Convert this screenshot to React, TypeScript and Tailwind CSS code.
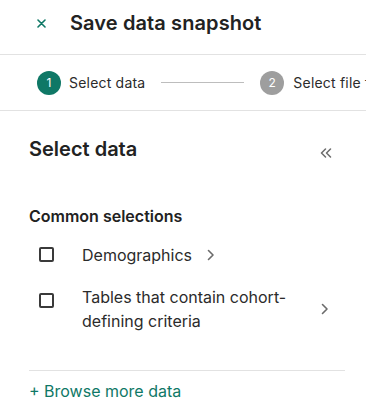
import type { ReactNode } from "react";

const TEAL = "#0f7866";

function Chevron({ className = "" }: { className?: string }) {
  return (
    <svg width="8" height="12" viewBox="0 0 8 12" className={className} fill="none">
      <path d="M1.5 1.5 6 6l-4.5 4.5" stroke="#6b6b6b" strokeWidth="1.6" strokeLinecap="round" strokeLinejoin="round" />
    </svg>
  );
}

function Row({ label, box, children }: { label: ReactNode; box: string; children?: ReactNode }) {
  return (
    <div className="flex items-start">
      <span className={`ml-[10px] h-[15px] w-[15px] shrink-0 rounded-[2px] border-2 border-[#3a3a3a] ${box}`} />
      <div className="ml-[28px] flex items-center">
        <span className="max-w-[224px] text-[16px] leading-6 text-[#2b2b2b]">{label}</span>
        <Chevron className="ml-[15px] shrink-0" />
      </div>
      {children}
    </div>
  );
}

export default function App() {
  return (
    <div className="h-[409px] w-[366px] overflow-hidden bg-white font-['Inter',sans-serif]">
      <header className="flex h-[55px] items-start border-b border-[#e2e2e2] pt-[9px]">
        <div className="flex h-7 items-center">
          <svg width="9" height="9" viewBox="0 0 9 9" className="ml-[37px]" fill="none">
            <path d="M1 1l7 7M8 1 1 8" stroke={TEAL} strokeWidth="1.6" strokeLinecap="round" />
          </svg>
          <h1 className="ml-[24px] text-[20px] font-semibold leading-7 tracking-[0.1px] text-[#222]">Save data snapshot</h1>
        </div>
      </header>

      <nav className="flex h-[56px] items-center whitespace-nowrap border-b border-[#e2e2e2] text-[14px] tracking-[0.2px] text-[#2b2b2b]">
        <span className="ml-[37px] flex h-6 w-6 shrink-0 items-center justify-center rounded-full bg-[#0f7866] text-[12px] text-white">1</span>
        <span className="ml-2">Select data</span>
        <span className="ml-4 h-px w-[83px] shrink-0 bg-[#bdbdbd]" />
        <span className="ml-4 flex h-6 w-6 shrink-0 items-center justify-center rounded-full bg-[#9e9e9e] text-[12px] text-white">2</span>
        <span className="ml-[9px]">Select file format</span>
      </nav>

      <main className="pl-[29px] pr-[21px] pt-6">
        <div className="flex items-center justify-between">
          <h2 className="text-[20px] font-semibold leading-7 text-[#222]">Select data</h2>
          <svg width="12" height="10" viewBox="0 0 12 10" className="mr-[13px] mt-2" fill="none">
            <path d="M5.5 1 1.5 5l4 4M10.5 1l-4 4 4 4" stroke="#6b6b6b" strokeWidth="1.5" strokeLinecap="round" strokeLinejoin="round" />
          </svg>
        </div>

        <h3 className="mt-[41px] text-[16px] font-semibold leading-6 text-[#222]">Common selections</h3>

        <div className="mt-[15px]">
          <Row label="Demographics" box="mt-[4px]" />
        </div>
        <div className="mt-[18px]">
          <Row label="Tables that contain cohort-defining criteria" box="mt-[8px]" />
        </div>

        <div className="mt-[37px] border-t border-[#e2e2e2] pt-2">
          <button className="text-[16px] leading-6 text-[#0f7866]">+ Browse more data</button>
        </div>
      </main>
    </div>
  );
}
